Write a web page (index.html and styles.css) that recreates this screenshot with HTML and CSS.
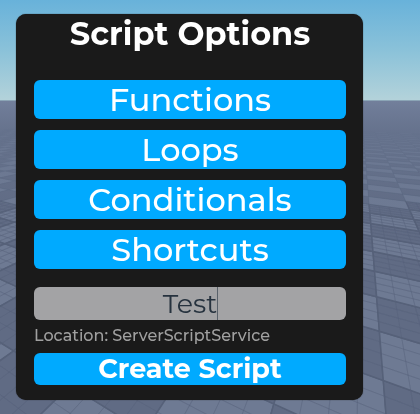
FILE: index.html
```html
<!DOCTYPE html>
<html lang="en">
<head>
<meta charset="utf-8">
<meta name="viewport" content="width=device-width, initial-scale=1">
<title>Script Options</title>
<link rel="stylesheet" href="styles.css">
</head>
<body>
<svg class="scene" viewBox="0 0 420 414" preserveAspectRatio="xMidYMid slice" aria-hidden="true">
  <defs>
    <linearGradient id="sky" x1="0" y1="0" x2="0" y2="1">
      <stop offset="0" stop-color="#68b2da"/>
      <stop offset="0.5" stop-color="#8bc2d9"/>
      <stop offset="1" stop-color="#b5d3da"/>
    </linearGradient>
    <linearGradient id="haze" gradientUnits="userSpaceOnUse" x1="0" y1="101" x2="0" y2="220">
      <stop offset="0" stop-color="#727f9b"/>
      <stop offset="0.25" stop-color="#697691bb"/>
      <stop offset="1" stop-color="#69769100"/>
    </linearGradient>
  </defs>
  <rect width="420" height="102" fill="url(#sky)"/>
  <rect y="101" width="420" height="313" fill="#5f6a83"/>
  <g id="floor"></g>
  <rect y="101" width="420" height="120" fill="url(#haze)"/>
  <rect y="100" width="420" height="1" fill="#8ba5b6"/>
</svg>
<main class="panel">
  <h1 class="title">Script Options</h1>
  <nav class="options" aria-label="Script options">
    <button class="option" type="button">Functions</button>
    <button class="option" type="button">Loops</button>
    <button class="option" type="button">Conditionals</button>
    <button class="option" type="button">Shortcuts</button>
  </nav>
  <form class="create">
    <div class="field">
      <input class="name" id="name" type="text" value="Test" aria-label="Script name" autocomplete="off" spellcheck="false">
      <span class="caret"></span>
    </div>
    <label class="location" for="name">Location: ServerScriptService</label>
    <button class="submit" type="button">Create Script</button>
  </form>
</main>
<script src="floor.js"></script>
</body>
</html>
```
FILE: styles.css
```css
* {
  box-sizing: border-box;
}

body {
  margin: 0;
  min-height: 100vh;
  padding: 14px 57px 14px 16px;
  background: #5f6a83;
  font-family: Montserrat, Inter, "Open Sans", sans-serif;
}

.scene {
  position: fixed;
  inset: 0;
  z-index: -1;
  width: 100%;
  height: 100%;
}

.panel {
  padding: 0 17px 15px 18px;
  border-radius: 10px;
  background: #1a1a1a;
  box-shadow: 0 0 1px #1a1a1a;
}

.title {
  margin: 0 0 26px;
  color: #fff;
  font-size: 32px;
  font-weight: 700;
  line-height: 40px;
  text-align: center;
}

.options {
  display: grid;
  gap: 11px;
  margin-bottom: 18px;
}

.option,
.submit {
  display: block;
  width: 100%;
  padding: 0;
  border: 0;
  border-radius: 6px;
  background: #00aaff;
  color: #fff;
  font-family: inherit;
  text-align: center;
}

.option {
  height: 39px;
  font-size: 32px;
  font-weight: 500;
  line-height: 39px;
}

.field {
  position: relative;
}

.name {
  display: block;
  width: 100%;
  height: 33px;
  padding: 0;
  border: 0;
  border-radius: 6px;
  outline: 0;
  background: #a3a3a5;
  color: #26323e;
  font-family: inherit;
  font-size: 27px;
  font-weight: 400;
  text-align: center;
}

.caret {
  position: absolute;
  top: 0;
  bottom: 0;
  left: calc(50% + 27px);
  width: 1px;
  background: #59616a;
}

.location {
  display: block;
  padding-bottom: 1px;
  color: #a0a0a0;
  font-size: 16px;
  font-weight: 500;
  line-height: 32px;
}

.submit {
  height: 32px;
  font-size: 27px;
  font-weight: 700;
  line-height: 32px;
}
```
FILE: floor.js
```js
// Checkered baseplate in two-point perspective.
const HORIZON = 101;
const LEFT_VP = -390;
const RIGHT_VP = 361;
const DEPTH = 313;
const NS = "http://www.w3.org/2000/svg";
const floor = document.getElementById("floor");

// Floor coordinates (u, v), measured in tiles, to picture coordinates.
function project(u, v) {
  const a = (25 + 115 * u) / DEPTH;
  const b = (506 + 180 * v) / DEPTH;
  const d = (RIGHT_VP - LEFT_VP) / (b - a);
  return [RIGHT_VP + a * d, HORIZON + d];
}

function draw(points, attrs) {
  const el = document.createElementNS(NS, "polygon");
  el.setAttribute("points", points.map(p => p.map(n => n.toFixed(1)).join(",")).join(" "));
  for (const key in attrs) el.setAttribute(key, attrs[key]);
  floor.appendChild(el);
}

for (let u = -34; u < 16; u++) {
  for (let v = -10; v < 40; v++) {
    if (506 + 180 * v - (25 + 115 * (u + 1)) < 120) continue;
    const corners = [project(u, v), project(u + 1, v), project(u + 1, v + 1), project(u, v + 1)];
    const xs = corners.map(p => p[0]);
    const ys = corners.map(p => p[1]);
    if (Math.min(...ys) > 414 || Math.max(...xs) < 0 || Math.min(...xs) > 420) continue;
    const light = (u + v) % 2 === 0;
    const near = Math.max(...ys) > 210;
    draw(corners, {
      fill: light ? "#6e7a93" : "#606b84",
      stroke: "#566179",
      "stroke-width": near ? 1.5 : 0.3
    });
    if (!near) continue;
    for (let s = 0.25; s < 1; s += 0.25) {
      const line = { fill: "none", stroke: "#566179", "stroke-width": 0.4, "stroke-opacity": 0.7 };
      draw([project(u + s, v), project(u + s, v + 1)], line);
      draw([project(u, v + s), project(u + 1, v + s)], line);
    }
  }
}
```
